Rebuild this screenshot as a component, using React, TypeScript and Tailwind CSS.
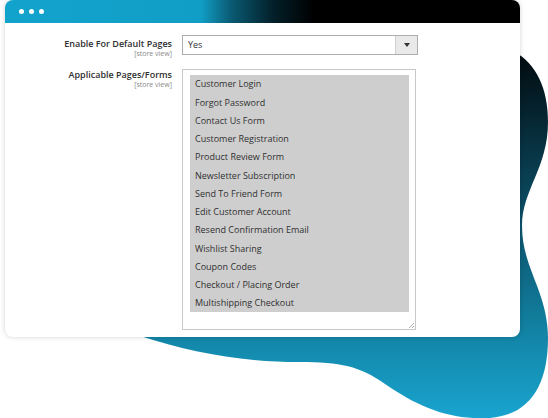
import React from "react";

const pages = [
    "Customer Login",
    "Forgot Password",
    "Contact Us Form",
    "Customer Registration",
    "Product Review Form",
    "Newsletter Subscription",
    "Send To Friend Form",
    "Edit Customer Account",
    "Resend Confirmation Email",
    "Wishlist Sharing",
    "Coupon Codes",
    "Checkout / Placing Order",
    "Multishipping Checkout",
];

function Blob() {
    return (
        <svg className="absolute inset-0" width="548" height="418" viewBox="0 0 548 418">
            <defs>
                <linearGradient id="blobFill" x1="0" y1="55" x2="0" y2="418" gradientUnits="userSpaceOnUse">
                    <stop offset="0" stopColor="#020c10" />
                    <stop offset="0.45" stopColor="#0c5068" />
                    <stop offset="0.8" stopColor="#1389ab" />
                    <stop offset="1" stopColor="#19a4cf" />
                </linearGradient>
            </defs>
            <path
                d="M 140 336 C 190 352, 240 362, 300 362 C 340 362, 360 366, 385 384 C 420 408, 450 420, 490 418 C 530 415, 548 385, 548 338 C 548 292, 522 268, 522 226 C 522 190, 548 168, 548 122 C 548 88, 536 64, 515 52 L 400 100 L 140 300 Z"
                fill="url(#blobFill)"
            />
        </svg>
    );
}

function Label({ title }: { title: string }) {
    return (
        <div className="w-[167px] flex flex-col items-end text-right">
            <span className="text-[9px] leading-[12px] font-semibold text-[#303030]">{title}</span>
            <span className="text-[7px] leading-[8px] text-[#8a8a8a]">[store view]</span>
        </div>
    );
}

export default function App() {
    return (
        <div className="relative w-[548px] h-[418px] bg-white overflow-hidden font-['Open_Sans',sans-serif]">
            <Blob />
            <div className="relative ml-[5px] w-[515px] h-[337px] bg-white rounded-[8px] shadow-[0_0_5px_rgba(0,0,0,0.18)]">
                <div className="h-[23px] rounded-t-[8px] flex items-center gap-[5px] pl-[14px] bg-[linear-gradient(to_right,#12a3cc_0%,#119ec6_38%,#0a5a72_44%,#03202a_52%,#000_60%,#000_100%)]">
                    <span className="w-[5px] h-[5px] rounded-full bg-white" />
                    <span className="w-[5px] h-[5px] rounded-full bg-white" />
                    <span className="w-[5px] h-[5px] rounded-full bg-white" />
                </div>

                <div className="flex flex-col gap-[14px] pt-[12px]">
                    <div className="flex items-start gap-[10px] h-[20px]">
                        <div className="pt-[3px]">
                            <Label title="Enable For Default Pages" />
                        </div>
                        <div className="w-[236px] h-[20px] border border-[#adadad] flex items-stretch bg-white">
                            <div className="flex-1 flex items-center pl-[5px] text-[9px] text-[#303030]">Yes</div>
                            <div className="w-[22px] border-l border-[#cfcfcf] bg-[#e9e9e9] flex items-center justify-center">
                                <span className="w-0 h-0 border-l-[3px] border-r-[3px] border-t-[4px] border-l-transparent border-r-transparent border-t-[#333]" />
                            </div>
                        </div>
                    </div>

                    <div className="flex items-start gap-[10px]">
                        <Label title="Applicable Pages/Forms" />
                        <div className="relative w-[234px] h-[261px] border border-[#c8c8c8] pt-[5px] pl-[7px] bg-white">
                            <div className="w-[219px] bg-[#cecece] flex flex-col">
                                {pages.map((p) => (
                                    <div key={p} className="h-[18.25px] flex items-center pl-[5px] text-[9px] text-[#303030]">
                                        {p}
                                    </div>
                                ))}
                            </div>
                            <svg className="absolute right-[1px] bottom-[1px]" width="6" height="6" viewBox="0 0 6 6">
                                <path d="M 6 1 L 1 6 M 6 4 L 4 6" stroke="#9a9a9a" strokeWidth="0.8" />
                            </svg>
                        </div>
                    </div>
                </div>
            </div>
        </div>
    );
}
